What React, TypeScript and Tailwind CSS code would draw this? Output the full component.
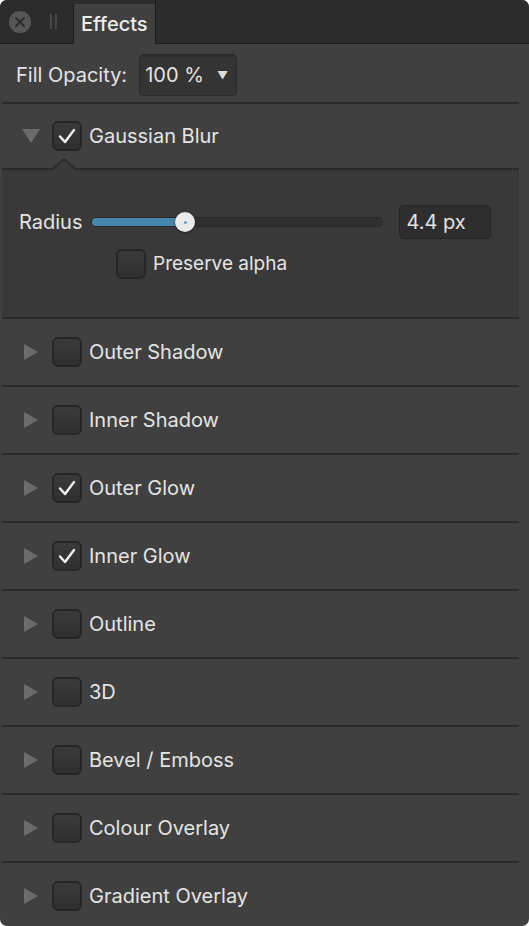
import { useState } from "react";

const EFFECTS = [
    { title: "Outer Shadow", on: false },
    { title: "Inner Shadow", on: false },
    { title: "Outer Glow", on: true },
    { title: "Inner Glow", on: true },
    { title: "Outline", on: false },
    { title: "3D", on: false },
    { title: "Bevel / Emboss", on: false },
    { title: "Colour Overlay", on: false },
    { title: "Gradient Overlay", on: false },
];

const FONT = { fontFamily: "Inter, 'Noto Sans', sans-serif" };

export default function App() {
    const [radius] = useState(4.4);

    return (
        <div className="w-[529px] h-[926px] bg-white" style={FONT}>
            <div className="flex flex-col h-full overflow-hidden rounded-[7px] bg-[#404040] text-[#e4e4e4]">
                {/* header with tab */}
                <div className="flex items-end h-[44px] bg-[#2c2c2c] shrink-0">
                    <div className="flex items-center self-stretch pl-[9px] border-b border-[#1c1c1c]">
                        <div className="flex items-center justify-center w-[22px] h-[22px] rounded-full bg-[#575757]">
                            <svg width="12" height="12" viewBox="0 0 12 12">
                                <path d="M2 2L10 10M10 2L2 10" stroke="#2c2c2c" strokeWidth="2" strokeLinecap="round" />
                            </svg>
                        </div>
                        <div className="flex gap-[3px] ml-[19px] mr-[16px]">
                            <div className="w-[2px] h-[15px] bg-[#474747]" />
                            <div className="w-[2px] h-[15px] bg-[#474747]" />
                        </div>
                    </div>
                    <div className="flex items-center h-[40px] w-[82px] pl-[7px] bg-[#404040] border-l border-[#1c1c1c] text-[20px] font-medium text-[#ececec]">
                        Effects
                    </div>
                    <div className="flex-1 self-stretch border-b border-[#1c1c1c] border-l border-l-[#1c1c1c]" />
                </div>

                {/* fill opacity */}
                <div className="flex items-center h-[58px] pt-[4px] pl-[16px] shrink-0">
                    <span className="text-[20px]">Fill Opacity:</span>
                    <div className="flex items-center justify-between ml-[12px] w-[98px] h-[42px] pl-[5px] pr-[8px] rounded-[5px] bg-[#343434] border border-[#2a2a2a] shadow-[inset_0_2px_0_#2e2e2e]">
                        <span className="text-[20px]">100 %</span>
                        <span className="text-[11px] text-[#dcdcdc]">▼</span>
                    </div>
                </div>
                <Sep />

                {/* gaussian blur header */}
                <div className="flex items-center h-[64px] shrink-0">
                    <svg width="18" height="14" viewBox="0 0 18 14" className="ml-[22px]">
                        <path d="M0 0H18L9 14Z" fill="#6b6b6b" />
                    </svg>
                    <Check on className="ml-[12px]" />
                    <span className="ml-[7px] text-[20px]">Gaussian Blur</span>
                </div>

                {/* expanded body */}
                <div className="relative flex flex-col h-[151px] ml-[2px] mr-[10px] bg-[#393939] border-t-2 border-b-2 border-[#2a2a2a] shrink-0">
                    <svg width="22" height="11" viewBox="0 0 22 11" className="absolute -top-[11px] left-[51px]">
                        <path d="M0 11L11 0L22 11Z" fill="#393939" />
                        <path d="M0 10L11 0L22 10" fill="none" stroke="#2a2a2a" strokeWidth="2" />
                    </svg>
                    <div className="flex items-center mt-[35px] pl-[17px]">
                        <span className="text-[20px]">Radius</span>
                        <div className="relative flex items-center w-[292px] h-[10px] ml-[9px] rounded-full bg-[#2f2f2f] border border-[#282828]">
                            <div className="h-full w-[94px] rounded-full bg-[#4686aa]" />
                            <div className="absolute left-[83px] flex items-center justify-center w-[20px] h-[20px] rounded-full bg-[#eaeaea] shadow-[0_1px_2px_#00000088]">
                                <div className="w-[3px] h-[3px] rounded-full bg-[#6aa0c8]" />
                            </div>
                        </div>
                        <div className="flex items-center ml-[16px] w-[92px] h-[34px] pl-[6px] rounded-[5px] bg-[#2e2e2e] border border-[#262626] text-[20px]">
                            {radius} px
                        </div>
                    </div>
                    <div className="flex items-center mt-[10px] pl-[114px]">
                        <Check on={false} />
                        <span className="ml-[7px] text-[19px]">Preserve alpha</span>
                    </div>
                </div>

                {EFFECTS.map((e, i) => (
                    <div key={e.title} className="shrink-0">
                        <div className="flex items-center h-[66px]">
                            <svg width="14" height="16" viewBox="0 0 14 16" className="ml-[24px]">
                                <path d="M0 0L14 8L0 16Z" fill="#6b6b6b" />
                            </svg>
                            <Check on={e.on} className="ml-[14px]" />
                            <span className="ml-[7px] text-[20px]">{e.title}</span>
                        </div>
                        {i < EFFECTS.length - 1 && <Sep />}
                    </div>
                ))}
            </div>
        </div>
    );
}

function Sep() {
    return <div className="h-[2px] ml-[2px] mr-[10px] bg-[#2b2b2b] shrink-0" />;
}

function Check({ on, className = "" }: { on: boolean; className?: string }) {
    return (
        <div className={`flex items-center justify-center w-[30px] h-[30px] rounded-[6px] bg-gradient-to-b from-[#3a3a3a] to-[#303030] border-2 border-[#262626] ${className}`}>
            {on && (
                <svg width="18" height="16" viewBox="0 0 18 16">
                    <path d="M2 8.5L7 14L16 2" fill="none" stroke="#f2f2f2" strokeWidth="2.4" strokeLinecap="round" strokeLinejoin="round" />
                </svg>
            )}
        </div>
    );
}
